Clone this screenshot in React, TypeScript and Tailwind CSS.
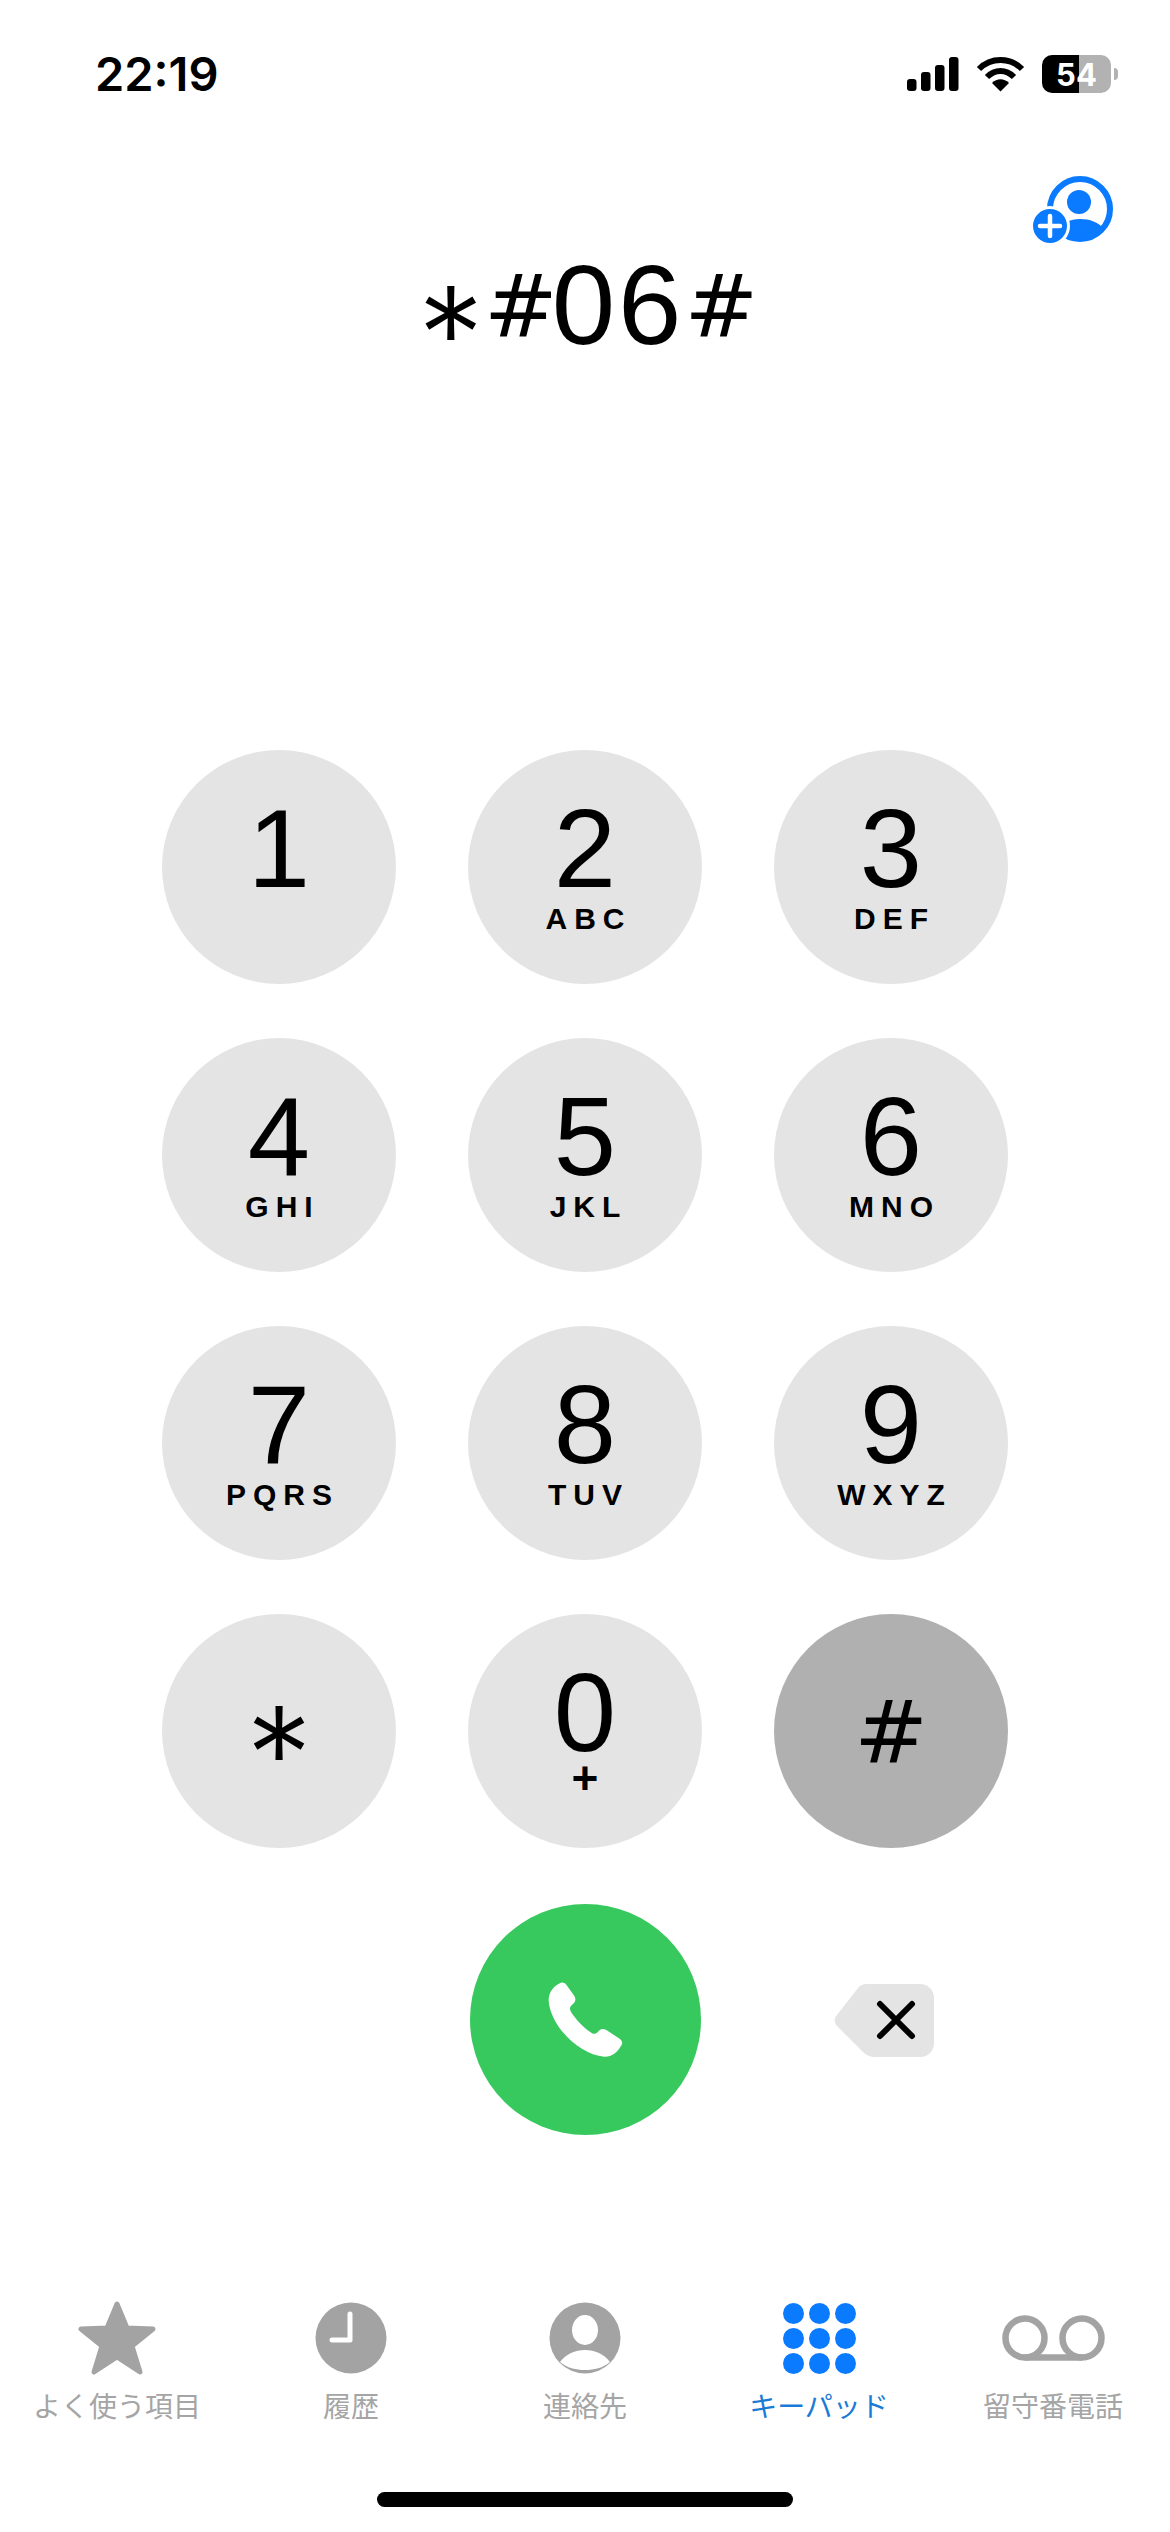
import React from "react";

const FONT = "font-['Inter','Noto_Sans_CJK_JP',sans-serif]";
const DIAL_FONT = "font-['Liberation_Sans',Arial,sans-serif]";
const ASTERISK = "inline-block font-['Inter',sans-serif] text-[132px] font-light leading-[60px] tracking-normal";

const keys = [
  { digit: "1", letters: "" },
  { digit: "2", letters: "ABC" },
  { digit: "3", letters: "DEF" },
  { digit: "4", letters: "GHI" },
  { digit: "5", letters: "JKL" },
  { digit: "6", letters: "MNO" },
  { digit: "7", letters: "PQRS" },
  { digit: "8", letters: "TUV" },
  { digit: "9", letters: "WXYZ" },
];

const StatusBar = () => (
  <div className="flex h-[172px] items-start justify-between pl-[95px] pr-[52px] pt-[50px]">
    <span className="text-[47px] font-semibold leading-[48px] text-black">22:19</span>
    <div className="flex items-center gap-[17px] pt-[5px]">
      <svg width="52" height="34" viewBox="0 0 52 34">
        <rect x="0" y="22" width="9.5" height="12" rx="3" fill="#000" />
        <rect x="14" y="15" width="9.5" height="19" rx="3" fill="#000" />
        <rect x="28" y="8" width="9.5" height="26" rx="3" fill="#000" />
        <rect x="42" y="0" width="9.5" height="34" rx="3" fill="#000" />
      </svg>
      <svg width="49" height="36" viewBox="0 0 49 36" fill="none">
        <path d="M3 13 C15 1 34 1 46 13" stroke="#000" strokeWidth="6" />
        <path d="M11 21 C19 13 30 13 38 21" stroke="#000" strokeWidth="6" />
        <path d="M16 27 C21 22 28 22 33 27 L24.5 35.5 Z" fill="#000" />
      </svg>
      <div className="flex items-center gap-[3px]">
        <div className="relative flex h-[38px] w-[69px] overflow-hidden rounded-[10px]">
          <div className="w-[37px] bg-black" />
          <div className="flex-1 bg-[#b2b2b2]" />
          <span className="absolute inset-0 flex items-center justify-center text-[31px] font-bold leading-none text-white">
            54
          </span>
        </div>
        <div className="h-[12px] w-[4px] rounded-r-full bg-[#b2b2b2]" />
      </div>
    </div>
  </div>
);

const AddContactIcon = () => (
  <svg width="88" height="78" viewBox="0 0 88 78">
    <circle cx="50" cy="37" r="30" fill="none" stroke="#0a7aff" strokeWidth="6" />
    <circle cx="49" cy="30" r="12" fill="#0a7aff" />
    <path d="M24 58 C32 51 40 47 50 47 C60 47 68 50 74 57 C68 64 60 68 50 68 C42 68 32 65 24 58 Z" fill="#0a7aff" />
    <circle cx="20" cy="54" r="20" fill="#fff" />
    <circle cx="20" cy="54" r="17" fill="#0a7aff" />
    <path d="M10 54 H30 M20 44 V64" stroke="#fff" strokeWidth="4.5" strokeLinecap="round" />
  </svg>
);

const DisplayHash = () => (
  <span className="inline-block -translate-y-[7px] font-['DejaVu_Sans',sans-serif] text-[88px] tracking-[-6px]">#</span>
);

const Key = ({ digit, letters }: { digit: string; letters: string }) => (
  <button className={`flex h-[234px] w-[234px] flex-col items-center rounded-full bg-[#e4e4e4] pt-[54px] text-black ${DIAL_FONT}`}>
    <span className="text-[112px] leading-[90px]">{digit}</span>
    {letters === "+" ? (
      <span className="mt-[5px] text-[46px] font-bold leading-[30px]">+</span>
    ) : (
      <span className="mt-[10px] pl-[7px] text-[30px] font-bold leading-[30px] tracking-[7px]">{letters}</span>
    )}
  </button>
);

const PhoneIcon = () => (
  <svg width="75" height="75" viewBox="0 0 223 225">
    <path
      d="M38 2 C44 0 50 3 54 8 L78 42 C83 50 82 58 76 64 L68 72 C64 76 64 82 67 88 C78 108 108 140 130 153 C136 157 142 156 146 152 L152 146 C158 140 166 140 174 144 L214 170 C222 176 224 184 218 192 C206 212 190 225 168 224 C90 218 6 130 1 56 C0 32 16 10 38 2 Z"
      fill="#fff"
    />
  </svg>
);

const BackspaceIcon = () => (
  <svg width="100" height="73" viewBox="0 0 100 73">
    <path
      d="M32 0 H86 C94 0 100 6 100 14 V59 C100 67 94 73 86 73 H42 C36 73 32 71 28 67 L3 42 C0 39 0 34 3 31 L24 4 C26 1 29 0 32 0 Z"
      fill="#e4e4e4"
    />
    <path d="M46 20 L78 52 M78 20 L46 52" stroke="#000" strokeWidth="6" strokeLinecap="round" />
  </svg>
);

const tabIcons = {
  star: (
    <svg width="78" height="76" viewBox="0 0 78 76">
      <path
        d="M39 4 L49 28 L75 29 L54 46 L62 72 L39 57 L16 72 L24 46 L3 29 L29 28 Z"
        fill="#a3a3a3"
        stroke="#a3a3a3"
        strokeWidth="5"
        strokeLinejoin="round"
      />
    </svg>
  ),
  clock: (
    <svg width="72" height="72" viewBox="0 0 72 72">
      <circle cx="36" cy="36" r="35.5" fill="#a3a3a3" />
      <path d="M35 12 V38 H17" fill="none" stroke="#fff" strokeWidth="5" strokeLinecap="round" strokeLinejoin="round" />
    </svg>
  ),
  person: (
    <svg width="72" height="72" viewBox="0 0 72 72">
      <circle cx="36" cy="36" r="35.5" fill="#a3a3a3" />
      <ellipse cx="36" cy="28" rx="13" ry="15" fill="#fff" />
      <path d="M11 60 C17 52 26 48 36 48 C46 48 55 52 61 60 C54 66 45 68 36 68 C27 68 18 66 11 60 Z" fill="#fff" />
    </svg>
  ),
  keypad: (
    <div className="grid grid-cols-3 gap-x-[5px] gap-y-[4px]">
      {Array.from({ length: 9 }).map((_, i) => (
        <div key={i} className="h-[21px] w-[21px] rounded-full bg-[#0a7aff]" />
      ))}
    </div>
  ),
  voicemail: (
    <svg width="103" height="46" viewBox="0 0 103 46" fill="none" stroke="#a3a3a3" strokeWidth="6.5">
      <circle cx="23" cy="23" r="19.5" />
      <circle cx="80" cy="23" r="19.5" />
      <path d="M23 42.5 H80" />
    </svg>
  ),
};

const tabs = [
  { label: "よく使う項目", icon: tabIcons.star },
  { label: "履歴", icon: tabIcons.clock },
  { label: "連絡先", icon: tabIcons.person },
  { label: "キーパッド", icon: tabIcons.keypad, active: true },
  { label: "留守番電話", icon: tabIcons.voicemail },
];

const App: React.FC = () => {
  return (
    <div className={`flex h-[2532px] w-[1170px] flex-col overflow-hidden bg-white ${FONT}`}>
      <StatusBar />

      <div className="flex h-[78px] justify-end pr-[52px]">
        <AddContactIcon />
      </div>

      <div className={`flex h-[110px] items-center justify-center text-[114px] leading-none tracking-[3px] text-black ${DIAL_FONT}`}>
        <div className="whitespace-nowrap">
          <span className={`${ASTERISK} translate-y-[38px]`}>*</span>
          <DisplayHash />
          06
          <DisplayHash />
        </div>
      </div>

      <div className="mt-[390px] grid grid-cols-[234px_234px_234px] justify-center gap-x-[72px] gap-y-[54px]">
        {keys.map((k) => (
          <Key key={k.digit} digit={k.digit} letters={k.letters} />
        ))}
        <button className="flex h-[234px] w-[234px] items-center justify-center rounded-full bg-[#e4e4e4] text-black">
          <span className={`${ASTERISK} translate-y-[23px]`}>*</span>
        </button>
        <Key digit="0" letters="+" />
        <button className="flex h-[234px] w-[234px] items-center justify-center rounded-full bg-[#b0b0b0] pt-[4px] font-['DejaVu_Sans',sans-serif] text-[88px] leading-none text-black">
          #
        </button>

        <div />
        <div className="flex h-[234px] items-center justify-center">
          <button className="flex h-[231px] w-[231px] items-center justify-center rounded-full bg-[#38c95e]">
            <PhoneIcon />
          </button>
        </div>
        <div className="flex h-[234px] items-center justify-center pr-[14px] pt-[3px]">
          <BackspaceIcon />
        </div>
      </div>

      <div className="mt-[164px] grid grid-cols-5">
        {tabs.map((t) => (
          <div key={t.label} className="flex flex-col items-center">
            <div className="flex h-[76px] items-center justify-center">{t.icon}</div>
            <span className={`mt-[13px] text-[28px] leading-[36px] ${t.active ? "text-[#1a7bd6]" : "text-[#a5a5a5]"}`}>
              {t.label}
            </span>
          </div>
        ))}
      </div>

      <div className="mt-[67px] flex justify-center">
        <div className="h-[15px] w-[416px] rounded-full bg-black" />
      </div>
    </div>
  );
};

export default App;
